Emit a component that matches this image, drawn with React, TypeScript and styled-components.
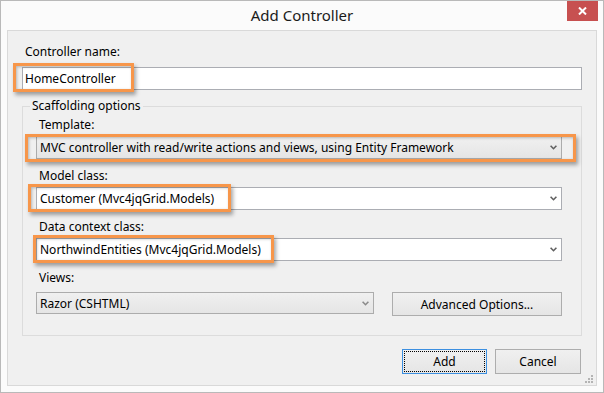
import React from 'react'
import styled, { createGlobalStyle } from 'styled-components'

const GlobalStyle = createGlobalStyle`
  html, body {
    margin: 0;
    padding: 0;
    background: #ffffff;
  }
  body {
    font-family: 'Noto Sans', 'Segoe UI', sans-serif;
    font-size: 12px;
    color: #000;
  }
  * {
    box-sizing: border-box;
  }
`

const Window = styled.div`
  width: 604px;
  height: 393px;
  border: 1px solid #b9b9b9;
  background: #fbfbfb;
  display: flex;
  flex-direction: column;
`

const TitleBar = styled.div`
  height: 29px;
  flex: none;
  display: grid;
  grid-template-columns: 1fr auto 1fr;
  align-items: start;
`

const Title = styled.div`
  grid-column: 2;
  font-size: 15px;
  line-height: 29px;
  color: #1a1a1a;
`

const CloseButton = styled.div`
  grid-column: 3;
  justify-self: end;
  width: 31px;
  height: 20px;
  margin-right: 5px;
  background: #c75050;
  display: flex;
  align-items: center;
  justify-content: center;
`

const Panel = styled.div`
  position: relative;
  flex: 1;
  margin: 0 6px 6px;
  border: 1px solid #d9d9d9;
  background: #f0f0f0;
  padding: 13px 14px 0;
  display: flex;
  flex-direction: column;
`

const Label = styled.div`
  font-size: 12px;
  line-height: 16px;
  margin: 0 0 3px 3px;
  color: #000;
`

const NameLabel = styled(Label)`
  margin-bottom: 7px;
`

const Anchor = styled.div`
  position: relative;
`

const Highlight = styled.div<{ $l: number; $t: number; $w: number; $h: number }>`
  position: absolute;
  left: ${(p) => p.$l}px;
  top: ${(p) => p.$t}px;
  width: ${(p) => p.$w}px;
  height: ${(p) => p.$h}px;
  border: 3px solid #f7964a;
  box-shadow: 2px 3px 4px rgba(0, 0, 0, 0.35), inset 1px 1px 3px rgba(0, 0, 0, 0.25);
  pointer-events: none;
`

const TextBox = styled.div`
  height: 23px;
  border: 1px solid #abadb3;
  background: #fff;
  padding: 0 2px;
  line-height: 21px;
  white-space: nowrap;
`

const GroupBox = styled.fieldset`
  margin: 8px 0 0;
  min-width: 0;
  border: 1px solid #dcdcdc;
  padding: 3px 19px 19px 13px;
`

const Legend = styled.legend`
  margin-left: -6px;
  padding: 0 2px;
  font-size: 12px;
  line-height: 16px;
  color: #000;
`

const Field = styled.div<{ $gap?: number }>`
  display: flex;
  flex-direction: column;
  margin-top: ${(p) => p.$gap ?? 0}px;
`

const Select = styled.div<{ $plain?: boolean; $h?: number }>`
  height: ${(p) => p.$h ?? 23}px;
  border: 1px solid ${(p) => (p.$plain ? '#acacac' : '#abadb3')};
  background: ${(p) => (p.$plain ? 'linear-gradient(#f0f0f0, #e5e5e5)' : '#fff')};
  display: flex;
  align-items: center;
  padding: 0 4px 0 3px;
  white-space: nowrap;
`

const SelectText = styled.span`
  flex: 1;
  overflow: hidden;
`

const ViewsRow = styled.div`
  display: grid;
  grid-template-columns: 1fr 170px;
  column-gap: 18px;
  align-items: start;
`

const Button = styled.div<{ $w?: number; $h?: number; $default?: boolean }>`
  width: ${(p) => (p.$w ? `${p.$w}px` : 'auto')};
  height: ${(p) => p.$h ?? 25}px;
  border: 1px solid ${(p) => (p.$default ? '#3c8fe0' : '#adadad')};
  background: linear-gradient(#f0f0f0, #e5e5e5);
  display: flex;
  align-items: center;
  justify-content: center;
  outline: ${(p) => (p.$default ? '1px dotted #000' : 'none')};
  outline-offset: -3px;
  color: #000;
`

const Footer = styled.div`
  margin-top: 13px;
  display: flex;
  justify-content: flex-end;
  gap: 8px;
  padding-right: 1px;
`

const Grip = styled.svg`
  position: absolute;
  right: 2px;
  bottom: 1px;
`

const Chevron = ({ color = '#5f5f5f' }: { color?: string }) => (
  <svg width="7" height="5" viewBox="0 0 7 5">
    <polyline points="0.6,0.8 3.5,3.7 6.4,0.8" fill="none" stroke={color} strokeWidth="1.6" />
  </svg>
)

export default function App() {
  return (
    <>
      <GlobalStyle />
      <Window>
        <TitleBar>
          <Title>Add Controller</Title>
          <CloseButton>
            <svg width="9" height="8" viewBox="0 0 9 8">
              <path d="M1 0.5 L8 7.5 M8 0.5 L1 7.5" stroke="#fff" strokeWidth="2" />
            </svg>
          </CloseButton>
        </TitleBar>
        <Panel>
          <NameLabel>Controller name:</NameLabel>
          <Anchor>
            <TextBox>HomeController</TextBox>
            <Highlight $l={-9} $t={-4} $w={121} $h={29} />
          </Anchor>

          <GroupBox>
            <Legend>Scaffolding options</Legend>

            <Field>
              <Label>Template:</Label>
              <Anchor>
                <Select $plain>
                  <SelectText>MVC controller with read/write actions and views, using Entity Framework</SelectText>
                  <Chevron />
                </Select>
                <Highlight $l={-11} $t={-2} $w={551} $h={28} />
              </Anchor>
            </Field>

            <Field $gap={9}>
              <Label>Model class:</Label>
              <Anchor>
                <Select>
                  <SelectText>Customer (Mvc4jqGrid.Models)</SelectText>
                  <Chevron />
                </Select>
                <Highlight $l={-8} $t={-3} $w={203} $h={28} />
              </Anchor>
            </Field>

            <Field $gap={9}>
              <Label>Data context class:</Label>
              <Anchor>
                <Select>
                  <SelectText>NorthwindEntities (Mvc4jqGrid.Models)</SelectText>
                  <Chevron />
                </Select>
                <Highlight $l={-3} $t={-3} $w={241} $h={28} />
              </Anchor>
            </Field>

            <Field $gap={9}>
              <Label>Views:</Label>
              <ViewsRow>
                <Select $plain $h={22} style={{ marginTop: 3 }}>
                  <SelectText>Razor (CSHTML)</SelectText>
                  <Chevron color="#8a8a8a" />
                </Select>
                <Button $h={24} style={{ marginTop: 3 }}>Advanced Options...</Button>
              </ViewsRow>
            </Field>
          </GroupBox>

          <Footer>
            <Button $w={85} $default>Add</Button>
            <Button $w={86}>Cancel</Button>
          </Footer>

          <Grip width="9" height="9" viewBox="0 0 9 9">
            <g fill="#b4b4b4">
              <rect x="6" y="0" width="2" height="2" />
              <rect x="3" y="3" width="2" height="2" />
              <rect x="6" y="3" width="2" height="2" />
              <rect x="0" y="6" width="2" height="2" />
              <rect x="3" y="6" width="2" height="2" />
              <rect x="6" y="6" width="2" height="2" />
            </g>
          </Grip>
        </Panel>
      </Window>
    </>
  )
}
